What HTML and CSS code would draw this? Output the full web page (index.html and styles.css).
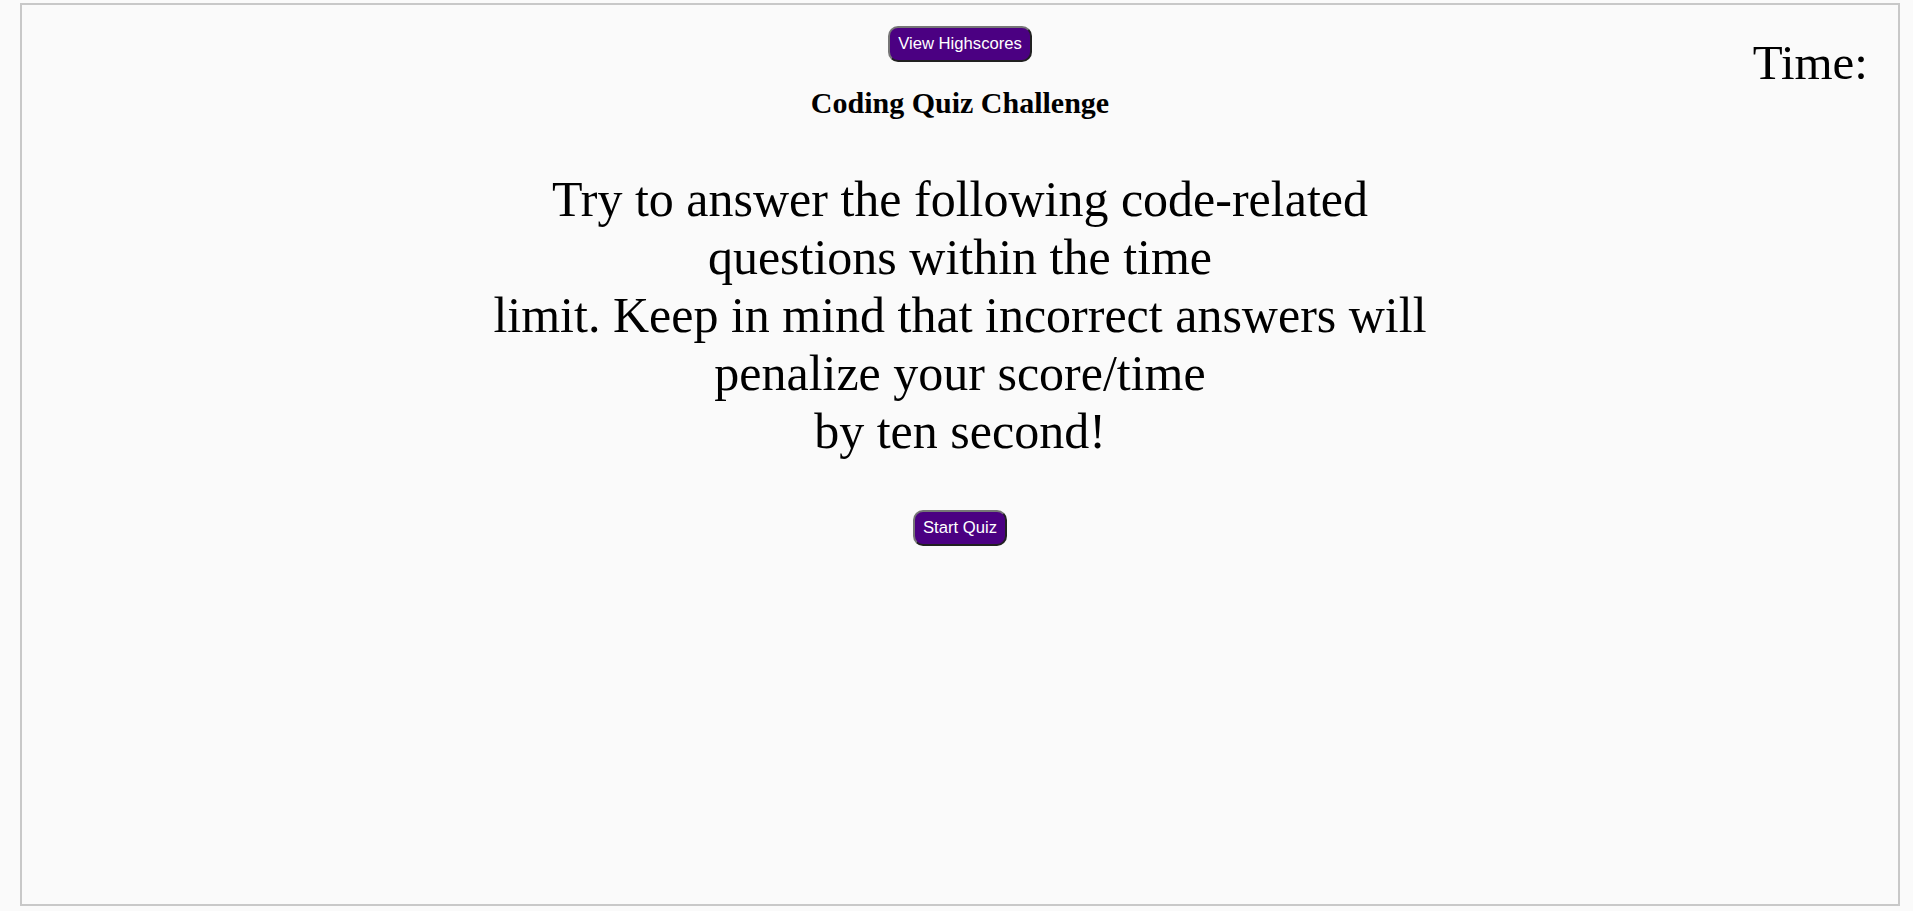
FILE: index.html
```html
<!DOCTYPE html>
<html lang="en">
<head>
<meta charset="utf-8">
<title>Coding Quiz Challenge</title>
<link rel="stylesheet" href="styles.css">
</head>
<body>
<main class="frame">
  <header class="top">
    <button class="btn btn-scores">View Highscores</button>
    <h2 class="title">Coding Quiz Challenge</h2>
    <div class="timer">Time:</div>
  </header>
  <p class="intro">Try to answer the following code-related<br>questions within the time <br>limit. Keep in mind that incorrect answers will<br>penalize your score/time <br>by ten second!</p>
  <div class="start-row">
    <button class="btn btn-start">Start Quiz</button>
  </div>
</main>
</body>
</html>
```

FILE: styles.css
```css
html, body {
  margin: 0;
  padding: 0;
  background: #fafafa;
}

body {
  font-family: "Liberation Serif", "Times New Roman", serif;
  color: #000;
}

.frame {
  box-sizing: border-box;
  height: 903px;
  margin: 3px 13px 5px 20px;
  border: 2px solid #c8c8c8;
  padding-top: 21px;
  display: flex;
  flex-direction: column;
  align-items: center;
}

.top {
  width: 100%;
  display: grid;
  grid-template-columns: 1fr auto 1fr;
  grid-template-rows: auto auto;
}

.btn-scores {
  grid-column: 2;
  grid-row: 1;
  justify-self: center;
}

.title {
  grid-column: 2;
  grid-row: 2;
  margin: 24px 0 0;
  font-size: 30px;
  font-weight: bold;
  text-align: center;
  line-height: normal;
}

.timer {
  grid-column: 3;
  grid-row: 1 / span 2;
  justify-self: end;
  align-self: start;
  margin-top: 8px;
  padding-right: 30px;
  font-size: 49px;
  line-height: normal;
}

.btn {
  font-family: "Liberation Sans", Arial, sans-serif;
  font-size: 16.67px;
  line-height: normal;
  color: #fff;
  background: #4b0082;
  border: 2px outset #767676;
  border-radius: 10px;
  padding: 6px 8px;
  cursor: pointer;
}

.intro {
  margin: 50px 0 0;
  font-size: 50px;
  line-height: normal;
  text-align: center;
}

.start-row {
  margin-top: 50px;
  display: flex;
  justify-content: center;
}
```
